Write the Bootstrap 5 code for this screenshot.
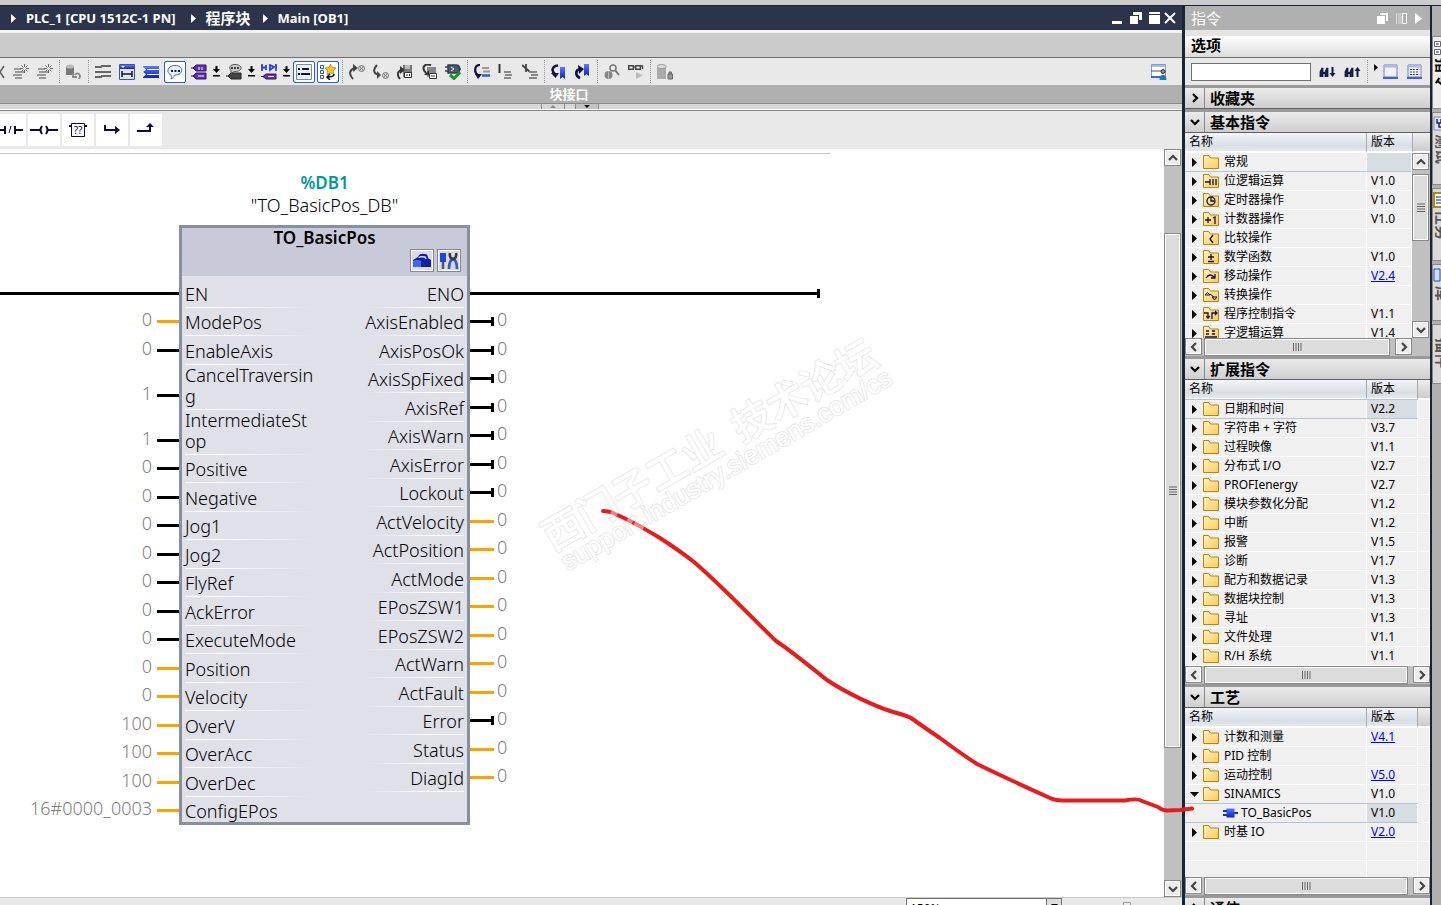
<!DOCTYPE html>
<html lang="zh-CN">
<head>
<meta charset="utf-8">
<meta name="viewport" content="width=device-width, initial-scale=1">
<title>PLC_1 - Main [OB1]</title>
<link href="https://cdn.jsdelivr.net/npm/bootstrap@5.3.0/dist/css/bootstrap.min.css" rel="stylesheet">
<style>
body{font-family:"Noto Sans","Noto Sans CJK SC",sans-serif;font-size:12px;line-height:19px;color:#000;background:#cbcbcb}
button{font:inherit;color:inherit;background:none;border:0;padding:0}
svg{display:block;flex:none}
.topstrip{height:5px;background:#cbcbcb}
.frame-dark{border-top:1px solid #1c2335}
.crumbs{height:24px;background:#2c344c;color:#fff;font-weight:700;font-size:13px;padding-left:11px;padding-right:5px}
.crumbs a{color:#fff;text-decoration:none;margin-left:10px;margin-right:15px}
.crumbs .cjk{font-size:15px;margin-right:12px}
.graybar{height:28px;border-top:3px solid #f4f4f4;border-bottom:1px solid #707070;background:#cbcbcb}
.tools{height:27px;background:#e9e9e9}
.tool{width:22px;height:22px;margin:0 1px;border:1px solid transparent;display:flex;align-items:center;justify-content:center;flex:none}
.tool.active{background:#fff;border-color:#2a62c8;border-radius:2px}
.tool-end{margin-left:auto;margin-right:12px}
.drop{width:11px;flex:none;display:flex;justify-content:center}
.drop-cut{width:9px}
.tsep{width:5px;height:23px;flex:none;background:repeating-linear-gradient(#999 0 1px,transparent 1px 2px) 2px 0/1px 100% no-repeat}
.iface{height:19px;background:#b0b0b0;border-bottom:1px solid #888;color:#fff;font-weight:700;font-size:13px;line-height:18px;padding-right:44px}
.splitbar{height:7px;background:#d8d8d8;border-bottom:1px solid #888;box-shadow:inset 0 -1px #fff;gap:10px;padding-right:42px}
.splitbar button{width:24px;height:5px;border:1px solid #888;border-width:0 1px;display:flex;justify-content:center;align-items:center}
.splitbar button:last-child{background:#c4c4c4}
.favs{height:38px;background:#e9e9e9;gap:2px}
.favs button{width:32px;height:32px;background:#fff;display:flex;align-items:center;justify-content:center}
.favs button:first-child{width:26px}
.canvas{background:#fff;font-weight:300}
.netline{width:831px;height:1px;margin-top:4px;background:#c9c9c9}
.net{display:grid;grid-template-columns:179px 291px 1fr;padding-top:17px;font-size:18px;line-height:21px}
.dbname{line-height:23px;margin-bottom:8px}
.dbname b{color:#099;font-weight:600;font-size:17px}
.pins{display:grid;margin:0;padding:0;list-style:none}
.pins-in{height:546px;grid-template-rows:repeat(3,57fr) repeat(2,90fr) repeat(13,57fr)}
.pins-out{height:513px;grid-template-rows:repeat(18,57fr)}
.outside{margin-top:54px}
.outside li{display:flex;align-items:flex-end;color:#808080}
.pins-in.outside li{justify-content:flex-end}
.pinval{padding-bottom:6px;margin:0 5px}
.pins-out .pinval{margin:0 3px}
.wire{height:3px;width:22px;background:#000;margin-bottom:13px;flex:none}
.pins-out .wire{width:24px}
.wire.analog{background:#ffa200}
.wire.closed{height:9px;margin-bottom:10px;background:linear-gradient(#000,#000) 0 3px/100% 3px no-repeat,linear-gradient(#000,#000) 100% 0/3px 100% no-repeat}
.pins-in .wire.rail{width:179px}
.pins-out .wire.rail{width:350px}
.fb{border:3px solid #8890a0;background:#e0e0e9}
.fb-head{height:48px;background:#c9cad9;font-weight:600;font-size:17px;line-height:19px}
.fb-icons{gap:3px;padding:2px 6px 0 0}
.fb-icons button{width:24px;height:23px;border:1px solid #888;box-shadow:inset 0 0 0 1px #fff;background:#dcdce2;display:flex;align-items:center;justify-content:center}
.fb-body{padding:3px 3px 0;height:546px}
.fb-body li{display:flex;align-items:flex-end;padding-bottom:2px;border-bottom:1px solid;border-image:linear-gradient(90deg,#fff 30px,#fff0 130px) 1;word-break:break-all}
.fb-body .pins-out li{justify-content:flex-end;border-image:linear-gradient(270deg,#fff 30px,#fff0 100px) 1}
.fb-body .pins-in li:last-child{border-image:none;border-color:transparent}
.inname{width:130px}
.vbar{width:18px;background:#c0c0c0;flex:none}
.sbtn{width:17px;height:17px;background:#ececec;border:1px solid #888;box-shadow:inset 0 0 0 1px #fff;display:flex;align-items:center;justify-content:center;flex:none}
.thumb{border:1px solid #888;box-shadow:inset 0 0 0 1px #fff;background:#dcdcdc;display:flex;align-items:center;justify-content:center}
.vbar .thumb{width:17px}
.statusbar{height:8px;background:#e9e9e9;border-top:1px solid #ccc}
.zoomsel{width:156px;height:20px;margin-left:906px;border:1px solid #707070;background:#fff;font-size:12px;padding:0 0 0 3px;appearance:none;color:#000}
.zoomarrow{width:16px;height:20px;margin-left:-16px;border:1px solid #707070;background:#ddd}
.splitdark{width:3px;background:#1c2335;flex:none}
.splitdark.slim{width:2px}
.sidepanel{width:245px;flex:none;background:#999}
.ptitle{height:24px;background:#b0b0b0;color:#fff;font-size:15px;padding:0 8px 0 6px}
.popts{height:28px;border-top:6px solid #e4e4e4;border-bottom:1px solid #707070;background:linear-gradient(#fff,#dcdcdc);font-size:15px;font-weight:700;padding-left:6px}
.psearch{height:27px;background:#e9e9e9;padding:0 7px 0 6px}
.psearch input{width:120px;height:18px;border:1px solid #707070;background:#fff;padding:0 3px}
.sect{margin-top:3px}
.secthead{height:21px;width:100%;border-bottom:1px solid #606060;background:linear-gradient(#ebebeb,#cfcfcf);font-size:15px;font-weight:700;text-align:left;display:flex;align-items:center}
.secthead i{width:20px;height:20px;border-right:1px solid #888;margin-right:5px;display:flex;align-items:center;justify-content:center;color:#000}
.lib{width:100%;table-layout:fixed;border-collapse:separate;border-spacing:0;margin:0;background:#f0f0f0}
.cname{width:182px}
.cver{width:51px}
.cver-s{width:46px}
.lib th{height:20px;font-weight:400;padding:0 0 0 4px;line-height:18px;border-right:1px solid #aaa;border-bottom:2px solid #fff;background:linear-gradient(#f4f6f8,#d9dee5 70%,#e4e8ec)}
.lib th:last-child{border-right:0;background:linear-gradient(#eee,#ccc)}
.lib td{height:19px;padding:0 0 0 4px;line-height:18px;border-right:1px solid #fff;border-bottom:1px solid #fff;white-space:nowrap}
.lib td:first-child{padding-left:5px}
.lib .sel td:nth-child(-n+2){border-bottom-color:#b8c4d2;box-shadow:0 -1px #b8c4d2}
.lib .sel td:nth-child(2){background:#d8dde2}
.lib a{color:#00f}
.clip{overflow:hidden}
.h-basic{height:205px}
.h-basic-rows{height:185px}
.h-ext{height:286px}
.h-tech{height:169px}
.hbar{height:18px;background:#c0c0c0}
.hbar .thumb{height:18px;margin:0 1px 0 2px}
.corner{width:18px}
.rowcell{display:flex;align-items:center;height:18px}
.rowcell svg{margin-right:5px}
.rowcell .caret-r{margin:0 6px 0 2px}
.rowcell .caret-d{margin-right:4px}
.rowcell .fbicon{margin:0 3px 0 33px}
.sidetabs{width:9px;background:#b0b0b0;padding-top:30px;gap:3px;flex:none}
.sidetabs button{writing-mode:vertical-rl;text-orientation:sideways;width:20px;background:#dadada;border:1px solid #888;border-right:0;color:#555;font-weight:700;font-size:15px;line-height:18px;display:flex;align-items:center;gap:2px;padding-top:3px;white-space:nowrap}
.sidetabs button.on{background:#eee;color:#000}
.sidetabs svg{align-self:flex-end}
.overlay{left:0;top:0;pointer-events:none}
</style>
</head>
<body>
<svg width="0" height="0" class="position-absolute" aria-hidden="true">
<defs>
<linearGradient id="gf" x1="0" y1="0" x2="1" y2="1"><stop offset="0" stop-color="#fff4c0"/><stop offset="1" stop-color="#ffc95a"/></linearGradient>
<linearGradient id="gb" x1="0" y1="0" x2="0" y2="1"><stop offset="0" stop-color="#5a7cff"/><stop offset="1" stop-color="#0a1fc0"/></linearGradient>
<symbol id="folder" viewBox="0 0 16 14"><path d="M.5 13.500V.5h5l2 2.500h8v10.500z" fill="url(#gf)" stroke="#b8860b"/></symbol>
<symbol id="tri" viewBox="0 0 5 9"><path d="M0 0l5 4.500L0 9z"/></symbol>
<symbol id="trid" viewBox="0 0 9 5"><path d="M0 0h9L4.500 5z"/></symbol>
<symbol id="dropdn" viewBox="0 0 7 11"><path d="M2.500 0h2v3H7L3.500 7 0 3h2.500zM0 9h7v1.500H0z"/></symbol>
<symbol id="cu" viewBox="0 0 12 8"><path d="M2 6l4-4 4 4" fill="none" stroke="#444" stroke-width="2.200"/></symbol>
<symbol id="cd" viewBox="0 0 12 8"><path d="M2 2l4 4 4-4" fill="none" stroke="#444" stroke-width="2.200"/></symbol>
<symbol id="cl" viewBox="0 0 8 12"><path d="M6 2L2 6l4 4" fill="none" stroke="#444" stroke-width="2.200"/></symbol>
<symbol id="cr" viewBox="0 0 8 12"><path d="M2 2l4 4-4 4" fill="none" stroke="#444" stroke-width="2.200"/></symbol>
<symbol id="hd" viewBox="0 0 12 8"><path d="M2 2l4 4 4-4" fill="none" stroke="#000" stroke-width="2.200"/></symbol>
<symbol id="hr" viewBox="0 0 8 12"><path d="M2 2l4 4-4 4" fill="none" stroke="#000" stroke-width="2.200"/></symbol>
<symbol id="hg" viewBox="0 0 9 8"><path d="M.5 0v8M3 0v8M5.500 0v8M8 0v8" stroke="#666"/></symbol>
<symbol id="vg" viewBox="0 0 8 9"><path d="M0 1h8M0 3.500h8M0 6h8M0 8.500h8" stroke="#666"/></symbol>
<symbol id="insnet" viewBox="0 0 16 16"><path d="M1 5h7M2 8h10M0 11h9M2 14h7" stroke="#999" stroke-width="2"/><path d="M11.500 0v3M11.500 6v3M7 4.500h3M13 4.500h3M8.500 1.500l2 2M14.500 1.500l-2 2M8.500 7.500l2-2M14.500 7.500l-2-2" stroke="#666"/></symbol>
<symbol id="cyl" viewBox="0 0 16 16"><path d="M0 2h8v9H0z" fill="#777"/><ellipse cx="4" cy="2.500" rx="4" ry="2" fill="#bbb"/><path d="M9 11c2-3 5-1 5 1s-1 2-1 3M7 9v4h4" fill="none" stroke="#888" stroke-width="1.800"/></symbol>
<symbol id="nets" viewBox="0 0 16 16"><path d="M0 3h6l1-1h9M0 8h16M0 13h6l1-1h9" stroke="#666" stroke-width="2.200" fill="none"/></symbol>
<symbol id="netop" viewBox="0 0 16 16"><path d="M.5.5h15v15H.5z" fill="#dfe6ff" stroke="#3450c8"/><path d="M1 1h14v4H1z" fill="url(#gb)"/><path d="M2 2h4L4 4z" fill="#fff"/><path d="M3 7v6M3 10h10M13 7v6" stroke="#112" stroke-width="1.500"/></symbol>
<symbol id="netcl" viewBox="0 0 16 16"><path d="M0 2h16v12H0z" fill="url(#gb)"/><path d="M4 5.500h12M4 10.500h12" stroke="#fff"/><path d="M0 3l3 2.500L0 8zM0 8l3 2.500L0 13z" fill="#fff"/></symbol>
<symbol id="cmt" viewBox="0 0 16 16"><path d="M8 1.500c9 0 9 9.500 0 9.500-1 2-2 3-4 4 .6-2 .5-3 0-4C-1 9 0 1.500 8 1.500z" fill="#e8f0ff" stroke="#4a64b8"/><path d="M4 7h2M7.500 7h2M11 7h2" stroke="#113" stroke-width="2"/></symbol>
<symbol id="tag" viewBox="0 0 16 16"><path d="M5 1h10v6H5L2 4zM5 9h10v6H5l-3-3z" fill="#6030b0" stroke="#301070"/><path d="M8 3v3M11 3v3M7 12h6" stroke="#fff"/><path d="M0 4h4M0 12h4" stroke="#222"/></symbol>
<symbol id="tagg" viewBox="0 0 16 16"><path d="M5 9h10v6H5l-3-3z" fill="#444" stroke="#222"/><path d="M9 .5c8 0 8 7 0 7L5 9V6C2 4 4 .5 9 .5z" fill="#ccc" stroke="#555"/><path d="M5 4h2M8 4h2M11 4h2" stroke="#111" stroke-width="1.500"/><path d="M0 12h3" stroke="#222"/></symbol>
<symbol id="tagc" viewBox="0 0 16 16"><path d="M1 0v7M1 3.500h3M5 1v5M9 1v5l4-3zM15 0v7" stroke="#2a3fe0" stroke-width="1.800" fill="none"/><path d="M5 10h10v5H5l-3-2.500z" fill="#6030b0" stroke="#301070"/><path d="M7 12.500h6" stroke="#fff"/><path d="M0 12.500h3" stroke="#222"/></symbol>
<symbol id="lst" viewBox="0 0 16 16"><path d="M.5.5h15v15H.5z" fill="#eef2ff" stroke="#7088d8"/><path d="M3 4v2M3 9v2M6 5h7M5 10h9" stroke="#113" stroke-width="2"/></symbol>
<symbol id="star" viewBox="0 0 16 16"><path d="M.5 1.500h3v3h-3zM.5 6.500h3v3h-3zM.5 11.500h3v3h-3z" fill="none" stroke="#3458c0"/><path d="M10.500 0l1.700 3.500 3.800.5-2.800 2.700.7 3.900-3.400-1.900L7 10.600l.7-3.900L5 4l3.800-.5z" fill="#ffc820" stroke="#a87800" stroke-width=".7"/><path d="M14 10c0 3-3 3-6 3M10 10l-3 3 3 3" fill="none" stroke="#113" stroke-width="1.500"/></symbol>
<symbol id="arcu" viewBox="0 0 16 16"><path d="M4 15C-1 10 1 5 6 4" fill="none" stroke="#444" stroke-width="2"/><path d="M4 0l5 4-5 4z" fill="#444"/><circle cx="12.500" cy="4.500" r="3" fill="#ddd" stroke="#777"/><path d="M10.500 2.500l4 4M14.500 2.500l-4 4" stroke="#777"/></symbol>
<symbol id="arcd" viewBox="0 0 16 16"><path d="M4 1C-1 6 1 10 6 11" fill="none" stroke="#444" stroke-width="2"/><path d="M4 7l4 4-4 4z" fill="#444"/><circle cx="12.500" cy="11.500" r="3" fill="#ddd" stroke="#777"/><path d="M10.500 9.500l4 4M14.500 9.500l-4 4" stroke="#777"/></symbol>
<symbol id="blkup" viewBox="0 0 16 16"><path d="M6 1h9v12H6z" fill="#777"/><path d="M8 1h5v4H8z" fill="#bbb"/><path d="M7.500 8.500h7v5h-7z" fill="#fff" stroke="#333"/><path d="M10 10v2M12.500 10v2" stroke="#333"/><path d="M3 15C-1 10 1 7 5 6" fill="none" stroke="#333" stroke-width="2"/><path d="M3 2l5 4-5 4z" fill="#333"/></symbol>
<symbol id="blkdn" viewBox="0 0 16 16"><path d="M6 3h9v10H6z" fill="#888"/><path d="M8.500 9.500h7v5h-7z" fill="#fff" stroke="#333"/><path d="M11 11v2M13 11v2" stroke="#333"/><path d="M10 1C3-1 0 4 5 9" fill="none" stroke="#333" stroke-width="2"/><path d="M8 6v5H3z" fill="#333"/></symbol>
<symbol id="chk" viewBox="0 0 16 16"><path d="M3 1h8c5 0 5 8 0 8H3zM0 3h3M0 7h3M14 5h2" fill="#4a5870" stroke="#333c50" stroke-width="1.500"/><path d="M6 3l3 2-3 2" fill="none" stroke="#fff"/><path d="M5 11l4 3.500L15 8" fill="none" stroke="#149a20" stroke-width="3"/></symbol>
<symbol id="goto" viewBox="0 0 16 16"><path d="M6 1C0 1 0 9 4 11" fill="none" stroke="#10104a" stroke-width="2.200"/><path d="M1 10h7l-4 5z" fill="#10104a"/><path d="M8 4h7M9 7.500h7" stroke="#999" stroke-width="2"/><path d="M8 11.500h8" stroke="#3058e8" stroke-width="2.500"/></symbol>
<symbol id="lines" viewBox="0 0 16 16"><path d="M1.500 0v9" stroke="#333" stroke-width="2"/><path d="M6 8h7M7 11h7M6 14h7" stroke="#888" stroke-width="2"/></symbol>
<symbol id="linesx" viewBox="0 0 16 16"><path d="M4 0v8M0 1l8 7" stroke="#444" stroke-width="1.800"/><path d="M7 8h8M9 11h7M7 14h8" stroke="#888" stroke-width="2"/></symbol>
<symbol id="bk1" viewBox="0 0 16 16"><path d="M7 1.500C1 2 0 7 4 10" fill="none" stroke="#10104a" stroke-width="2.500"/><path d="M0 9h8l-3.500 5z" fill="#10104a"/><path d="M9 3h5v12l-2.500-2L9 15z" fill="url(#gb)"/></symbol>
<symbol id="bk2" viewBox="0 0 16 16"><path d="M5 14C0 12 0 6 5 5" fill="none" stroke="#10104a" stroke-width="2.500"/><path d="M3 1l6 4-5 5z" fill="#10104a"/><path d="M9 0h5v12l-2.500-2L9 12z" fill="url(#gb)"/></symbol>
<symbol id="mag" viewBox="0 0 16 16"><circle cx="4.500" cy="11" r="4" fill="#888"/><path d="M4.500 7v8" stroke="#bbb"/><circle cx="9" cy="4" r="3" fill="#eee" stroke="#777" stroke-width="1.500"/><path d="M11 6l4 5" stroke="#777" stroke-width="2"/></symbol>
<symbol id="glass" viewBox="0 0 16 16"><path d="M.7 1.700h4.600v3.600H.7zM7.700 1.700h4.600v3.600H7.700zM5 3h3M12 2h2.500v3" fill="none" stroke="#444" stroke-width="1.400"/><path d="M8 8l7 3.500L8 15z" fill="#bbb"/></symbol>
<symbol id="cyl2" viewBox="0 0 16 16"><path d="M0 2h9v13H0z" fill="#aaa"/><ellipse cx="4.500" cy="2.500" rx="4.500" ry="2" fill="#ddd" stroke="#999"/><path d="M11 10h4.500v5H11zM12 10V8h2.500v2" fill="#999" stroke="#666"/></symbol>
<symbol id="usr" viewBox="0 0 16 16"><path d="M.5.500h14v13H.5z" fill="#fff" stroke="#8098d8"/><path d="M1 2h13" stroke="#a8b8f0" stroke-width="2"/><path d="M0 7h10" stroke="#456"/><path d="M0 13h12" stroke="#3a66d8" stroke-width="2"/><circle cx="12" cy="7.500" r="2" fill="#c88850" stroke="#321"/><path d="M8.500 16c0-7 7-7 7 0z" fill="#1878c0"/></symbol>
<symbol id="win" viewBox="0 0 16 16"><path d="M1 1h13v12H1z" fill="#eef2ff" stroke="#7080b8"/><path d="M1 2.500h13" stroke="#a8b8f0" stroke-width="2"/><path d="M0 14h15" stroke="#4060e0" stroke-width="2"/></symbol>
<symbol id="bino" viewBox="0 0 11 16"><path d="M1.500 13V8l2-4v9M6.500 13V8l2-4v9M3 9h4" fill="#5068a0" stroke="#10184a" stroke-width="1.800"/></symbol>
</defs>
</svg>
<div class="vh-100 d-flex flex-column overflow-hidden position-relative">
<div class="topstrip flex-shrink-0"></div>
<div class="d-flex flex-grow-1 frame-dark overflow-hidden">

<main class="d-flex flex-column flex-grow-1 overflow-hidden">
<nav class="crumbs d-flex align-items-center flex-shrink-0" aria-label="路径">
<svg width="5" height="9" fill="#fff"><use href="#tri"/></svg><a href="#">PLC_1 [CPU 1512C-1 PN]</a>
<svg width="5" height="9" fill="#fff"><use href="#tri"/></svg><a href="#" class="cjk">程序块</a>
<svg width="5" height="9" fill="#fff"><use href="#tri"/></svg><a href="#">Main [OB1]</a>
<div class="ms-auto d-flex">
<button aria-label="最小化"><svg width="18" height="12"><path d="M3 9h10v3H3z" fill="#fff"/></svg></button>
<button aria-label="还原"><svg width="18" height="12"><path d="M6 0h9v8h-3V3H6zM3 4h8v8H3z" fill="#fff"/></svg></button>
<button aria-label="最大化"><svg width="18" height="12"><path d="M4 0h11v2H4zM4 3h11v9H4z" fill="#fff"/></svg></button>
<button aria-label="关闭"><svg width="14" height="12"><path d="M2 1l10 10M12 1L2 11" stroke="#fff" stroke-width="2"/></svg></button>
</div>
</nav>
<div class="graybar flex-shrink-0"></div>
<div class="tools d-flex align-items-center flex-shrink-0" id="tools"></div>
<div class="iface text-center flex-shrink-0">块接口</div>
<div class="splitbar d-flex justify-content-center flex-shrink-0"><button aria-label="上移"><svg width="6" height="3"><path d="M0 3l3-3 3 3z" fill="#888"/></svg></button><button aria-label="下移"><svg width="6" height="3"><path d="M0 0h6L3 3z"/></svg></button></div>
<div class="favs d-flex align-items-center flex-shrink-0">
<button aria-label="常闭触点"><svg width="26" height="16" fill="none" stroke="#0a0a3c" stroke-width="2"><path d="M0 8h5M5 4v8M15 4v8M15 8h8"/><path d="M9 11l2-7" stroke-width="1"/></svg></button>
<button aria-label="线圈"><svg width="28" height="16" fill="none" stroke="#0a0a3c" stroke-width="2"><path d="M0 8h10M18 8h10M12 4q-3 4 0 8M16 4q3 4 0 8"/></svg></button>
<button aria-label="空功能框"><svg width="18" height="16"><path d="M2.500 1.500h13v13h-13z" fill="none" stroke="#0a0a3c"/><path d="M0 4h3M15 4h3" stroke="#0a0a3c" stroke-width="2"/><text x="9" y="12" font-size="10" text-anchor="middle" fill="#0a0a3c">??</text></svg></button>
<button aria-label="打开分支"><svg width="18" height="12" fill="none" stroke="#0a0a3c" stroke-width="2"><path d="M2 1v5h12"/><path d="M12 2l5 4-5 4z" fill="#0a0a3c" stroke="none"/></svg></button>
<button aria-label="关闭分支"><svg width="18" height="14" fill="none" stroke="#0a0a3c" stroke-width="2"><path d="M0 8h13V3"/><path d="M9 4l4-4 4 4z" fill="#0a0a3c" stroke="none"/></svg></button>
</div>

<div class="d-flex flex-grow-1 overflow-hidden">
<section class="canvas flex-grow-1 overflow-hidden">
<div class="netline"></div>
<div class="net">
<div></div>
<div class="dbname text-center"><b>%DB1</b><div>"TO_BasicPos_DB"</div></div>
<div></div>
<ul class="pins pins-in outside" id="inOut"></ul>
<div class="fb">
<div class="fb-head text-center">TO_BasicPos
<div class="fb-icons d-flex justify-content-end">
<button aria-label="组态"><svg width="20" height="17"><path d="M1 8l5-3q1-4 7-3 3 0 3 4l3 2v7H1z" fill="#1020a0"/><path d="M7 6q0-2 6-1l1 2" stroke="#cdf" stroke-width="1.500" fill="none"/><path d="M1 9l2-1h4l2 1v6H1z" fill="#4468e8"/></svg></button>
<button aria-label="调试"><svg width="20" height="18"><path d="M1 1h6v9H1z" fill="#2048d8"/><path d="M4 10v7" stroke="#555" stroke-width="2.500"/><path d="M11 1q-1 4 2 6M17 1q1 4-2 6" fill="none" stroke="#334" stroke-width="2.500"/><path d="M13 7q-3 3-3 10M15 7q3 3 3 10" fill="none" stroke="#2a5ae8" stroke-width="2.800"/><path d="M12 7h4" stroke="#334" stroke-width="3"/></svg></button>
</div></div>
<div class="fb-body d-flex justify-content-between">
<ul class="pins pins-in" id="inName"></ul>
<ul class="pins pins-out" id="outName"></ul>
</div>
</div>
<ul class="pins pins-out outside" id="outOut"></ul>
</div>
</section>
<div class="vbar d-flex flex-column">
<button class="sbtn" aria-label="向上滚动"><svg width="12" height="8"><use href="#cu"/></svg></button>
<div style="flex:67"></div><div class="thumb" style="flex:515"><svg width="8" height="9"><use href="#vg"/></svg></div><div style="flex:132"></div>
<button class="sbtn" aria-label="向下滚动"><svg width="12" height="8"><use href="#cd"/></svg></button>
</div>
</div>
<div class="statusbar d-flex flex-shrink-0 overflow-hidden"><select class="zoomsel flex-shrink-0" aria-label="缩放"><option>150%</option></select><div class="zoomarrow flex-shrink-0"><svg width="14" height="10"><path d="M4 5h7L7.500 9z"/></svg></div>
<svg class="ms-5 mt-1" width="26" height="8"><path d="M13.500.5h7v6h-7z" fill="#eee" stroke="#999"/></svg></div>
</main>

<div class="splitdark"></div>
<aside class="sidepanel d-flex flex-column overflow-hidden">
<div class="ptitle d-flex align-items-center flex-shrink-0">指令
<div class="ms-auto d-flex gap-2">
<svg width="11" height="11" fill="#fff"><path d="M3 0h8v8H9V2H3zM0 3h8v8H0z"/></svg>
<svg width="11" height="11"><path d="M.5 0v11M3 0v11M5 0v11" stroke="#ddd"/><path d="M6.500.5h4v10h-4z" fill="none" stroke="#fff"/></svg>
<svg width="7" height="11" fill="#fff"><path d="M0 0l7 5.500L0 11z"/></svg>
</div></div>
<div class="popts flex-shrink-0">选项</div>
<div class="psearch d-flex align-items-center flex-shrink-0">
<input type="text" aria-label="搜索指令">
<button class="ms-2" aria-label="向下搜索"><svg width="17" height="16"><use href="#bino" width="11" height="16"/><path d="M13.500 3v8" stroke="#10184a" stroke-width="2"/><path d="M10.500 9h6l-3 4z" fill="#10184a"/></svg></button>
<button class="ms-2" aria-label="向上搜索"><svg width="17" height="16"><use href="#bino" width="11" height="16"/><path d="M13.500 13V5" stroke="#10184a" stroke-width="2"/><path d="M10.500 7h6l-3-4z" fill="#10184a"/></svg></button>
<div class="tsep ms-1"></div>
<svg class="mb-2 ms-1" width="4" height="7"><use href="#tri"/></svg>
<button class="ms-auto" aria-label="视图"><svg width="16" height="16"><use href="#win"/></svg></button>
<button class="ms-2" aria-label="列表视图"><svg width="16" height="16"><use href="#win"/><path d="M3 5.500h9M3 8h9M3 10.500h9" stroke="#345" stroke-dasharray="2 1"/></svg></button>
</div>
<div class="sect"><button class="secthead"><i><svg width="8" height="12"><use href="#hr"/></svg></i>收藏夹</button></div>
<div class="sect"><button class="secthead"><i><svg width="12" height="8"><use href="#hd"/></svg></i>基本指令</button>
<div class="clip h-basic">
<table class="lib"><colgroup><col class="cname"><col class="cver-s"><col></colgroup><thead><tr><th>名称</th><th>版本</th><th></th></tr></thead></table>
<div class="d-flex"><div class="flex-grow-1 clip h-basic-rows"><table class="lib"><colgroup><col class="cname"><col></colgroup><tbody id="t1"></tbody></table></div>
<div class="vbar d-flex flex-column"><button class="sbtn" aria-label="向上滚动"><svg width="12" height="8"><use href="#cu"/></svg></button><div class="thumb mt-1" style="flex:66"><svg width="8" height="9"><use href="#vg"/></svg></div><div style="flex:82"></div><button class="sbtn" aria-label="向下滚动"><svg width="12" height="8"><use href="#cd"/></svg></button></div></div>
</div>
<div class="hbar d-flex"><button class="sbtn" aria-label="向左滚动"><svg width="8" height="12"><use href="#cl"/></svg></button><div class="thumb flex-grow-1"><svg width="9" height="8"><use href="#hg"/></svg></div><button class="sbtn ms-1" aria-label="向右滚动"><svg width="8" height="12"><use href="#cr"/></svg></button><div class="corner"></div></div>
</div>
<div class="sect"><button class="secthead"><i><svg width="12" height="8"><use href="#hd"/></svg></i>扩展指令</button>
<div class="clip h-ext"><table class="lib"><colgroup><col class="cname"><col class="cver"><col></colgroup><thead><tr><th>名称</th><th>版本</th><th></th></tr></thead><tbody id="t2"></tbody></table></div>
<div class="hbar d-flex"><button class="sbtn" aria-label="向左滚动"><svg width="8" height="12"><use href="#cl"/></svg></button><div class="thumb flex-grow-1"><svg width="9" height="8"><use href="#hg"/></svg></div><button class="sbtn ms-1" aria-label="向右滚动"><svg width="8" height="12"><use href="#cr"/></svg></button></div>
</div>
<div class="sect"><button class="secthead"><i><svg width="12" height="8"><use href="#hd"/></svg></i>工艺</button>
<div class="clip h-tech"><table class="lib"><colgroup><col class="cname"><col class="cver"><col></colgroup><thead><tr><th>名称</th><th>版本</th><th></th></tr></thead><tbody id="t3"></tbody></table></div>
<div class="hbar d-flex"><button class="sbtn" aria-label="向左滚动"><svg width="8" height="12"><use href="#cl"/></svg></button><div class="thumb flex-grow-1"><svg width="9" height="8"><use href="#hg"/></svg></div><button class="sbtn ms-1" aria-label="向右滚动"><svg width="8" height="12"><use href="#cr"/></svg></button></div>
</div>
<div class="sect"><button class="secthead"><i><svg width="8" height="12"><use href="#hr"/></svg></i>通信</button></div>
</aside>
<div class="splitdark slim"></div>
<div class="sidetabs d-flex flex-column overflow-hidden" id="tabs"></div>
</div>

<svg class="position-absolute overlay" width="1441" height="905" aria-hidden="true">
<g transform="translate(553 552) rotate(-30)" fill="#fff" stroke="#e9e9e9" stroke-width="2" stroke-linejoin="round" paint-order="stroke"><text x="0" y="0" font-size="40" font-weight="500" font-family="Noto Sans CJK SC,sans-serif">西门子工业&#160;&#160;技术论坛</text><text x="3" y="24" font-size="26" font-weight="400" font-family="Liberation Sans,sans-serif">support.industry.siemens.com/cs</text></g>
<path d="M603 511q6 0 10 2Q630 520 660 538 680 551 694 562C722 586 747 613 776 641 790 650 808 665 827 680 848 694 875 706 890 711Q905 715 911 718 925 728 940 738 960 753 977 764 1010 780 1050 798 1056 801 1065 800.500L1125 800.500Q1138 798 1142 801L1158 807Q1163 811 1168 810.500L1180 810 1192 808.500" fill="none" stroke="#e81c1c" stroke-width="4" stroke-linecap="round" stroke-linejoin="round"/>
<path d="M611 512l6 3M627 520l5 3M634 524l9 5" fill="none" stroke="#fff" stroke-opacity=".45" stroke-width="5"/>
</svg>
</div>

<script src="https://cdn.jsdelivr.net/npm/bootstrap@5.3.0/dist/js/bootstrap.bundle.min.js"></script>
<script>
const $ = id => document.getElementById(id);
const use = (id, w = 16, h = 16) => `<svg width="${w}" height="${h}"><use href="#${id}"/></svg>`;

// Toolbar: "|" separates groups, "*" marks a pressed button, "+" adds a drop-down arrow
$('tools').innerHTML = '<button class="drop drop-cut" aria-label="删除"><svg width="9" height="14"><path d="M-4 1l8 12M4 1l-8 12" stroke="#555" stroke-width="1.500"/></svg></button>' +
 'insnet insnet | cyl | nets netop netcl cmt* tag+ tagg+ tagc+ lst* star* | arcu arcd blkup blkdn chk | goto lines linesx | bk1 bk2 | mag glass | cyl2'.split(' ').map(t => {
  if (t === '|') return '<div class="tsep"></div>';
  const id = t.replace(/[*+]/, '');
  return `<button class="tool${t.includes('*') ? ' active' : ''}" aria-label="${id}">${use(id)}</button>` +
    (t.includes('+') ? `<button class="drop" aria-label="${id} 菜单">${use('dropdn', 7, 11)}</button>` : '');
 }).join('') + `<button class="tool tool-end" aria-label="设置">${use('usr')}</button>`;

// Block parameters: name, value, kind (r = power rail, a = analog, b = bool)
const ins = [['EN','','r'],['ModePos','0','a'],['EnableAxis','0','b'],['CancelTraversing','1','b'],['IntermediateStop','1','b'],['Positive','0','b'],['Negative','0','b'],['Jog1','0','b'],['Jog2','0','b'],['FlyRef','0','b'],['AckError','0','b'],['ExecuteMode','0','b'],['Position','0','a'],['Velocity','0','a'],['OverV','100','a'],['OverAcc','100','a'],['OverDec','100','a'],['ConfigEPos','16#0000_0003','a']];
const outs = [['ENO','','r'],['AxisEnabled','0','b'],['AxisPosOk','0','b'],['AxisSpFixed','0','b'],['AxisRef','0','b'],['AxisWarn','0','b'],['AxisError','0','b'],['Lockout','0','b'],['ActVelocity','0','a'],['ActPosition','0','a'],['ActMode','0','a'],['EPosZSW1','0','a'],['EPosZSW2','0','a'],['ActWarn','0','a'],['ActFault','0','a'],['Error','0','b'],['Status','0','a'],['DiagId','0','a']];
const cls = {r:'rail', a:'analog', b:''};
$('inOut').innerHTML = ins.map(p => `<li>${p[1] && `<span class="pinval">${p[1]}</span>`}<span class="wire ${cls[p[2]]}"></span></li>`).join('');
$('inName').innerHTML = ins.map(p => `<li><span class="inname">${p[0]}</span></li>`).join('');
$('outName').innerHTML = outs.map(p => `<li><span>${p[0]}</span></li>`).join('');
$('outOut').innerHTML = outs.map(p => `<li><span class="wire ${cls[p[2]]} ${p[2] !== 'a' ? 'closed' : ''}"></span>${p[1] && `<span class="pinval">${p[1]}</span>`}</li>`).join('');

// Instruction libraries
const glyph = {
 bit:'<path d="M2 8h5M7 5v6M10 5v6M13 5v6"/>', time:'<circle cx="8" cy="8" r="4"/><path d="M8 5v3h3"/>',
 cnt:'<path d="M2 8h6M5 5v6M10 6l2-1v7"/>', cmp:'<path d="M10 4L7 8l3 4"/>', math:'<path d="M5 7h6M8 4v6M5 11.500h6"/>',
 mov:'<path d="M3 9q4-6 9 0M12 5v4H8"/>', conv:'<path d="M2 7h5L4.500 4.500zM9 9h5l-2.500 3zM7 6l4 3" stroke-width="1"/>', ctl:'<path d="M1 6h4v5M3 9l2 2 2-2M9 12V6h4M12 4l2 2-2 2"/>', word:'<path d="M3 5h3M9 5h3M3 8h3M9 8h3M2 11h12"/>'};
const row = ([name, ver, o = {}]) => `<tr class="${o.sel ? 'sel' : ''}"><td><div class="rowcell">` +
 (name === '' ? '' : o.leaf ? '<svg class="fbicon" width="15" height="12"><path d="M3.500 1.500h8v9h-8z" fill="url(#gb)"/><path d="M0 4h4M0 8h4M11 6h4" stroke="#1430c0" stroke-width="2"/></svg>' :
  `${o.open ? '<svg class="caret-d" width="9" height="5"><use href="#trid"/></svg>' : '<svg class="caret-r" width="5" height="9"><use href="#tri"/></svg>'}<svg width="16" height="14"><use href="#folder"/><g fill="none" stroke="#10104a" stroke-width="1.300">${glyph[o.g] || ''}</g></svg>`) +
 `<span>${name}</span></div></td><td>${o.link ? `<a href="#">${ver}</a>` : ver}</td>`;
const fill = (id, rows, extra) => $(id).innerHTML = rows.map(r => row(r) + (extra ? '<td></td>' : '') + '</tr>').join('');
const L = {link:1};
fill('t1', [['常规','',{sel:1}],['位逻辑运算','V1.0',{g:'bit'}],['定时器操作','V1.0',{g:'time'}],['计数器操作','V1.0',{g:'cnt'}],['比较操作','',{g:'cmp'}],['数学函数','V1.0',{g:'math'}],['移动操作','V2.4',{g:'mov',link:1}],['转换操作','',{g:'conv'}],['程序控制指令','V1.1',{g:'ctl'}],['字逻辑运算','V1.4',{g:'word'}]]);
fill('t2', [['日期和时间','V2.2',{sel:1}],['字符串 + 字符','V3.7'],['过程映像','V1.1'],['分布式 I/O','V2.7'],['PROFIenergy','V2.7'],['模块参数化分配','V1.2'],['中断','V1.2'],['报警','V1.5'],['诊断','V1.7'],['配方和数据记录','V1.3'],['数据块控制','V1.3'],['寻址','V1.3'],['文件处理','V1.1'],['R/H 系统','V1.1']], 1);
fill('t3', [['计数和测量','V4.1',L],['PID 控制',''],['运动控制','V5.0',L],['SINAMICS','V1.0',{open:1}],['TO_BasicPos','V1.0',{sel:1,leaf:1}],['时基 IO','V2.0',L],['',''],['','']], 1);

// Task card tabs
$('tabs').innerHTML = [['指令',73],['测试',73],['任务',73],['库',57],['插件',60]].map(([t, h], i) =>
 `<button class="${i ? '' : 'on'}" style="height:${h}px"><svg width="18" height="${i === 4 ? 8 : 16}">${['<path d="M1.500 1.500h6v5h-6zM1.500 9.500h6v5h-6z" fill="#fff" stroke="#667"/><path d="M3 4h3M3 12h3" stroke="#226"/>','<path d="M1 1h12v13H1z" fill="#dde6ff" stroke="#88a"/><path d="M4 3v4h4V3M6 7v4h4" fill="none" stroke="#226" stroke-width="1.500"/>','<path d="M1 1h12v14H1z" fill="#fff" stroke="#b8860b" stroke-width="2"/><path d="M3 5h7M3 8h7M3 11h7" stroke="#226"/>','<path d="M1 1h6v12H1z" fill="#cfe0ff" stroke="#24c"/>',''][i]}</svg>${t}</button>`).join('');
</script>
</body>
</html>
